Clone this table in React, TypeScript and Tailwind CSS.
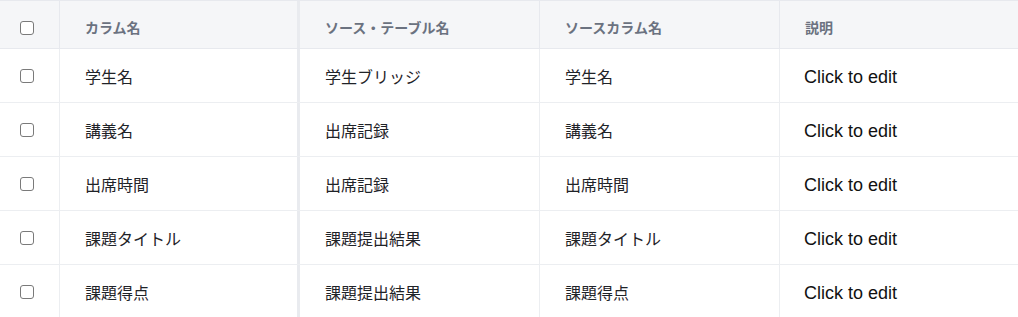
import React from "react";

const rows = [
  ["学生名", "学生ブリッジ", "学生名"],
  ["講義名", "出席記録", "講義名"],
  ["出席時間", "出席記録", "出席時間"],
  ["課題タイトル", "課題提出結果", "課題タイトル"],
  ["課題得点", "課題提出結果", "課題得点"],
];

const jp = { fontFamily: '"Noto Sans CJK JP", "Noto Sans", sans-serif' };
const lat = { fontFamily: '"Liberation Sans", Arial, sans-serif' };

function Box() {
  return <div className="w-[14px] h-[14px] rounded-[3px] border-[1.5px] border-[#7a7a7a] bg-white" />;
}

export default function App() {
  return (
    <div className="w-[1018px] h-[317px] overflow-hidden bg-white" style={jp}>
      <div className="flex h-[49px] border-y border-[#e7e9ee] bg-[#f5f6f8] text-[14px] font-bold text-[#6b7280]">
        <div className="w-[60px] shrink-0 border-r border-[#e7e9ee] flex items-center pl-[20px] pt-[6px]">
          <Box />
        </div>
        <div className="w-[237px] shrink-0 flex items-center pl-[25px] pt-[6px]">カラム名</div>
        <div className="w-[3px] shrink-0 bg-[#e9ebef]" />
        <div className="w-[240px] shrink-0 border-r border-[#e7e9ee] flex items-center pl-[25px] pt-[6px]">ソース・テーブル名</div>
        <div className="w-[240px] shrink-0 border-r border-[#e7e9ee] flex items-center pl-[25px] pt-[6px]">ソースカラム名</div>
        <div className="flex-1 flex items-center pl-[25px] pt-[6px]">説明</div>
      </div>
      {rows.map((r, i) => (
        <div key={i} className="flex h-[54px] border-b border-[#eceef1] text-[16px] text-[#1f2328]">
          <div className="w-[60px] shrink-0 border-r border-[#eceef1] flex items-center pl-[20px]">
            <Box />
          </div>
          <div className="w-[237px] shrink-0 flex items-center pl-[25px] pt-[1px]">{r[0]}</div>
          <div className="w-[3px] shrink-0 bg-[#e9ebef]" />
          <div className="w-[240px] shrink-0 border-r border-[#eceef1] flex items-center pl-[25px] pt-[1px]">{r[1]}</div>
          <div className="w-[240px] shrink-0 border-r border-[#eceef1] flex items-center pl-[25px] pt-[1px]">{r[2]}</div>
          <div className="flex-1 flex items-center pl-[24px] pt-[4px] text-[18px] text-[#111]" style={lat}>Click to edit</div>
        </div>
      ))}
    </div>
  );
}
